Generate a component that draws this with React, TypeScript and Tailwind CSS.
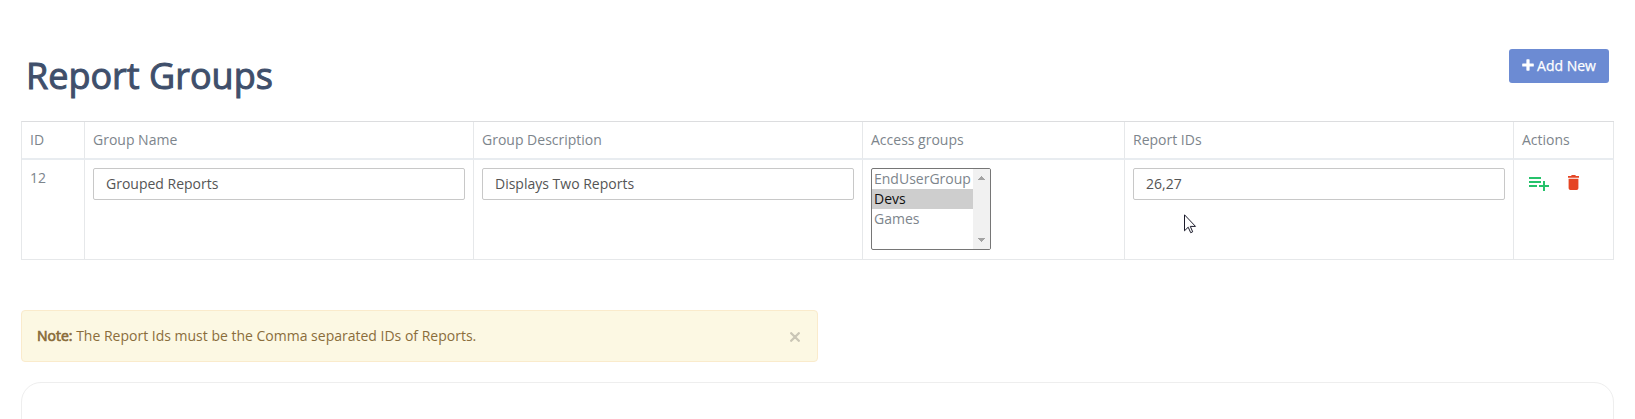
import React from "react";

const columns = ["ID", "Group Name", "Group Description", "Access groups", "Report IDs", "Actions"];

const options = [
  { name: "EndUserGroup", selected: false },
  { name: "Devs", selected: true },
  { name: "Games", selected: false },
];

function TextInput({ value }: { value: string }) {
  return (
    <input
      readOnly
      value={value}
      className="block h-8 w-[372px] rounded-[2px] border border-[#c8c8c8] bg-white px-3 pb-0.5 text-[14px] text-[#555555] outline-none"
    />
  );
}

function AccessList() {
  return (
    <div className="flex h-[82px] w-[120px] overflow-hidden rounded-[2px] border border-[#767676] bg-white">
      <ul className="w-[101px] shrink-0">
        {options.map((o) => (
          <li
            key={o.name}
            className={
              o.selected
                ? "h-5 bg-[#cecece] pl-0.5 leading-5 text-[#101010]"
                : "h-5 pl-0.5 leading-5 text-[#7d858c]"
            }
          >
            {o.name}
          </li>
        ))}
      </ul>
      <div className="flex w-[17px] flex-col items-center justify-between bg-[#f1f1f1] py-[7px]">
        <svg width="7" height="4" viewBox="0 0 7 4" fill="#a3a3a3" shapeRendering="crispEdges">
          <path d="M0 4V3h1V2h1V1h1V0h1v1h1v1h1v1h1v1z" />
        </svg>
        <svg width="7" height="4" viewBox="0 0 7 4" fill="#a3a3a3" shapeRendering="crispEdges">
          <path d="M0 0h7v1H6v1H5v1H4v1H3V3H2V2H1V1H0z" />
        </svg>
      </div>
    </div>
  );
}

function Pointer() {
  return (
    <svg
      className="absolute left-[59px] top-[54px]"
      width="13"
      height="20"
      viewBox="0 0 13 20"
    >
      <path
        d="M.5.8v16l3.7-3.6 2.5 5.5 2-.9-2.4-5.4h5.2z"
        fill="#fff"
        stroke="#1a1a2a"
        strokeWidth="1"
      />
    </svg>
  );
}

export default function App() {
  return (
    <div className="flex h-[419px] flex-col overflow-hidden bg-white pl-[21px] pr-[21px] font-['Open_Sans','Noto_Sans',sans-serif] text-[14px] text-[#7d858c]">
      <header className="flex h-[121px] shrink-0 items-start justify-between pl-[5px] pr-[5px] pt-[49px]">
        <h1 className="text-[36px] leading-[53px] text-[#3f4f6b] [-webkit-text-stroke:1px_#3f4f6b]">
          Report Groups
        </h1>
        <button className="flex h-[34px] w-[100px] items-center justify-center gap-[3px] rounded-[3px] bg-[#6c8bd3] pb-0.5 text-white">
          <svg width="12" height="12" viewBox="0 0 12 12" fill="#fff">
            <path d="M5 .3h2q.6 0 .6.6v3.5h3.6q.6 0 .6.6v2q0 .6-.6.6H7.6v3.5q0 .6-.6.6H5q-.6 0-.6-.6V7.6H.8q-.6 0-.6-.6V5q0-.6.6-.6h3.6V.9q0-.6.6-.6z" />
          </svg>
          <span className="[-webkit-text-stroke:0.25px_#fff]">Add New</span>
        </button>
      </header>

      <table className="h-[139px] w-[1593px] shrink-0 table-fixed border-separate border-spacing-0 border-l border-t border-l-[#e6e8ea] border-t-[#dcdddf]">
        <colgroup>
          <col className="w-[63px]" />
          <col className="w-[389px]" />
          <col className="w-[389px]" />
          <col className="w-[262px]" />
          <col className="w-[389px]" />
          <col className="w-[100px]" />
        </colgroup>
        <thead>
          <tr className="h-[38px]">
            {columns.map((c) => (
              <th
                key={c}
                className="border-b-2 border-r border-b-[#e8ecf0] border-r-[#e6e8ea] p-0 pb-0.5 pl-2 text-left align-middle font-normal"
              >
                {c}
              </th>
            ))}
          </tr>
        </thead>
        <tbody>
          <tr className="h-[100px] align-top [&>td]:border-b [&>td]:border-r [&>td]:border-[#e6e8ea] [&>td]:px-2 [&>td]:pt-2">
            <td className="leading-5">12</td>
            <td>
              <TextInput value="Grouped Reports" />
            </td>
            <td>
              <TextInput value="Displays Two Reports" />
            </td>
            <td>
              <AccessList />
            </td>
            <td className="relative">
              <TextInput value="26,27" />
              <Pointer />
            </td>
            <td>
              <div className="flex items-start pl-[7px] pt-[7px]">
                <svg className="mt-px" width="20" height="15" viewBox="0 0 20 15" fill="#26c26b">
                  <path d="M0 1h12v2H0zM0 5h12v2H0zM0 9h8v2H0zM14 5h2v4h4v2h-4v4h-2v-4h-4V9h4z" />
                </svg>
                <svg className="ml-[19px]" width="11" height="15" viewBox="0 0 11 15" fill="#e54524">
                  <path d="M0 1h3l.8-1h3.4L8 1h3v1.8H0zM.6 3.8h9.8v9.4q0 1.8-1.8 1.8H2.4Q.6 15 .6 13.2z" />
                </svg>
              </div>
            </td>
          </tr>
        </tbody>
      </table>

      <div className="mt-[50px] flex h-[52px] w-[797px] shrink-0 items-center justify-between rounded-[4px] border border-[#faebcc] bg-[#fcf8e3] pl-[15px] pr-[17px] text-[#8a6d3b]">
        <p className="pb-0.5">
          <span className="[-webkit-text-stroke:0.7px_#8a6d3b]">Note:</span> The Report Ids must be the Comma
          separated IDs of Reports.
        </p>
        <svg className="mt-px" width="10" height="10" viewBox="0 0 10 10" stroke="#cac6b6" strokeWidth="2.3" strokeLinecap="round">
          <path d="M1.2 1.2l7.6 7.6M8.8 1.2L1.2 8.8" />
        </svg>
      </div>

      <div className="mt-5 h-20 w-[1593px] shrink-0 rounded-[20px] border border-[#eeeeee]" />
    </div>
  );
}
